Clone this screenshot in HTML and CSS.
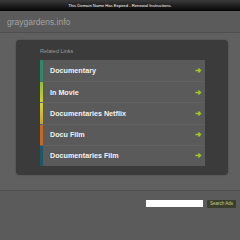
FILE: index.html
```html
<!DOCTYPE html>
<html lang="en">
<head>
    <meta charset="UTF-8">
    <meta name="viewport" content="width=device-width, initial-scale=1.0">
    <title>graygardens.info</title>
    <link rel="stylesheet" href="styles.css">
</head>
<body>
    <div class="topbar">This Domain Name Has Expired - Renewal Instructions.</div>
    <div class="header">graygardens.info</div>
    <div class="main">
        <div class="panel">
            <div class="panel-title">Related Links</div>
            <div class="links">
                <a class="link c1" href="#"><span>Documentary</span><svg class="arrow" viewBox="0 0 8 8"><path d="M0.5 4 H6 M3.8 1.6 L6.3 4 L3.8 6.4"/></svg></a>
                <a class="link c2" href="#"><span>In Movie</span><svg class="arrow" viewBox="0 0 8 8"><path d="M0.5 4 H6 M3.8 1.6 L6.3 4 L3.8 6.4"/></svg></a>
                <a class="link c3" href="#"><span>Documentaries Netflix</span><svg class="arrow" viewBox="0 0 8 8"><path d="M0.5 4 H6 M3.8 1.6 L6.3 4 L3.8 6.4"/></svg></a>
                <a class="link c4" href="#"><span>Docu Film</span><svg class="arrow" viewBox="0 0 8 8"><path d="M0.5 4 H6 M3.8 1.6 L6.3 4 L3.8 6.4"/></svg></a>
                <a class="link c5" href="#"><span>Documentaries Film</span><svg class="arrow" viewBox="0 0 8 8"><path d="M0.5 4 H6 M3.8 1.6 L6.3 4 L3.8 6.4"/></svg></a>
            </div>
        </div>
    </div>
    <div class="search">
        <input type="text" class="search-input">
        <button class="search-btn">Search Ads</button>
    </div>
</body>
</html>
```

FILE: styles.css
```css
body {
    font-family: 'Liberation Sans', Arial, sans-serif;
    background-color: #5b5b5b;
    margin: 0;
    height: 240px;
    overflow: hidden;
}
.topbar {
    height: 11px;
    background: linear-gradient(#3a3a3a, #050505);
    color: #fff;
    font-size: 4.2px;
    display: flex;
    align-items: center;
    justify-content: center;
}
.header {
    height: 21px;
    border-bottom: 1px solid #4f4f4f;
    padding-left: 7px;
    display: flex;
    align-items: center;
    font-size: 8.5px;
    color: #a3a3a3;
}
.main {
    padding: 7px 12px 15px 16px;
    background-color: #606060;
    border-bottom: 1px solid #4c4c4c;
}
.panel {
    background-color: #3b3b3b;
    border-radius: 4px;
    padding: 6px 23px 9px 24px;
    box-shadow: 0 0 2px rgba(0, 0, 0, 0.3);
}
.panel-title {
    height: 10px;
    line-height: 10px;
    font-size: 5.5px;
    color: #9a9a9a;
    margin-bottom: 4px;
}
.links {
    background-color: #5a5a5a;
}
.link {
    height: 21.2px;
    box-sizing: border-box;
    display: flex;
    align-items: center;
    justify-content: space-between;
    border-top: 1px solid #616161;
    padding: 0 3px 0 10px;
    background-repeat: no-repeat;
    background-size: 3px 100%;
    color: #f2f2f2;
    font-weight: bold;
    font-size: 7.2px;
    text-decoration: none;
}
.link:first-child {
    border-top: none;
}
.c1 { background-image: linear-gradient(#2a8a6c, #2a8a6c); }
.c2 { background-image: linear-gradient(#8cbc3c, #d2cc3a); }
.c3 { background-image: linear-gradient(#d4ce3c, #c9a233); }
.c4 { background-image: linear-gradient(#c4691f, #c4691f); }
.c5 { background-image: linear-gradient(#1f5568, #1f5568); }
.arrow {
    width: 7px;
    height: 7px;
    fill: none;
    stroke: #a6c72a;
    stroke-width: 1.6;
}
.search {
    display: flex;
    justify-content: flex-end;
    align-items: center;
    gap: 4px;
    padding: 9px 4px 0 0;
}
.search-input {
    width: 57px;
    height: 7px;
    box-sizing: border-box;
    border: none;
    padding: 0;
    background-color: #fff;
    outline: none;
}
.search-btn {
    width: 29px;
    height: 8px;
    padding: 0;
    border: none;
    border-radius: 1px;
    background-color: #3c3e2c;
    color: #c5cf8e;
    font-family: inherit;
    font-size: 4.5px;
}
```
